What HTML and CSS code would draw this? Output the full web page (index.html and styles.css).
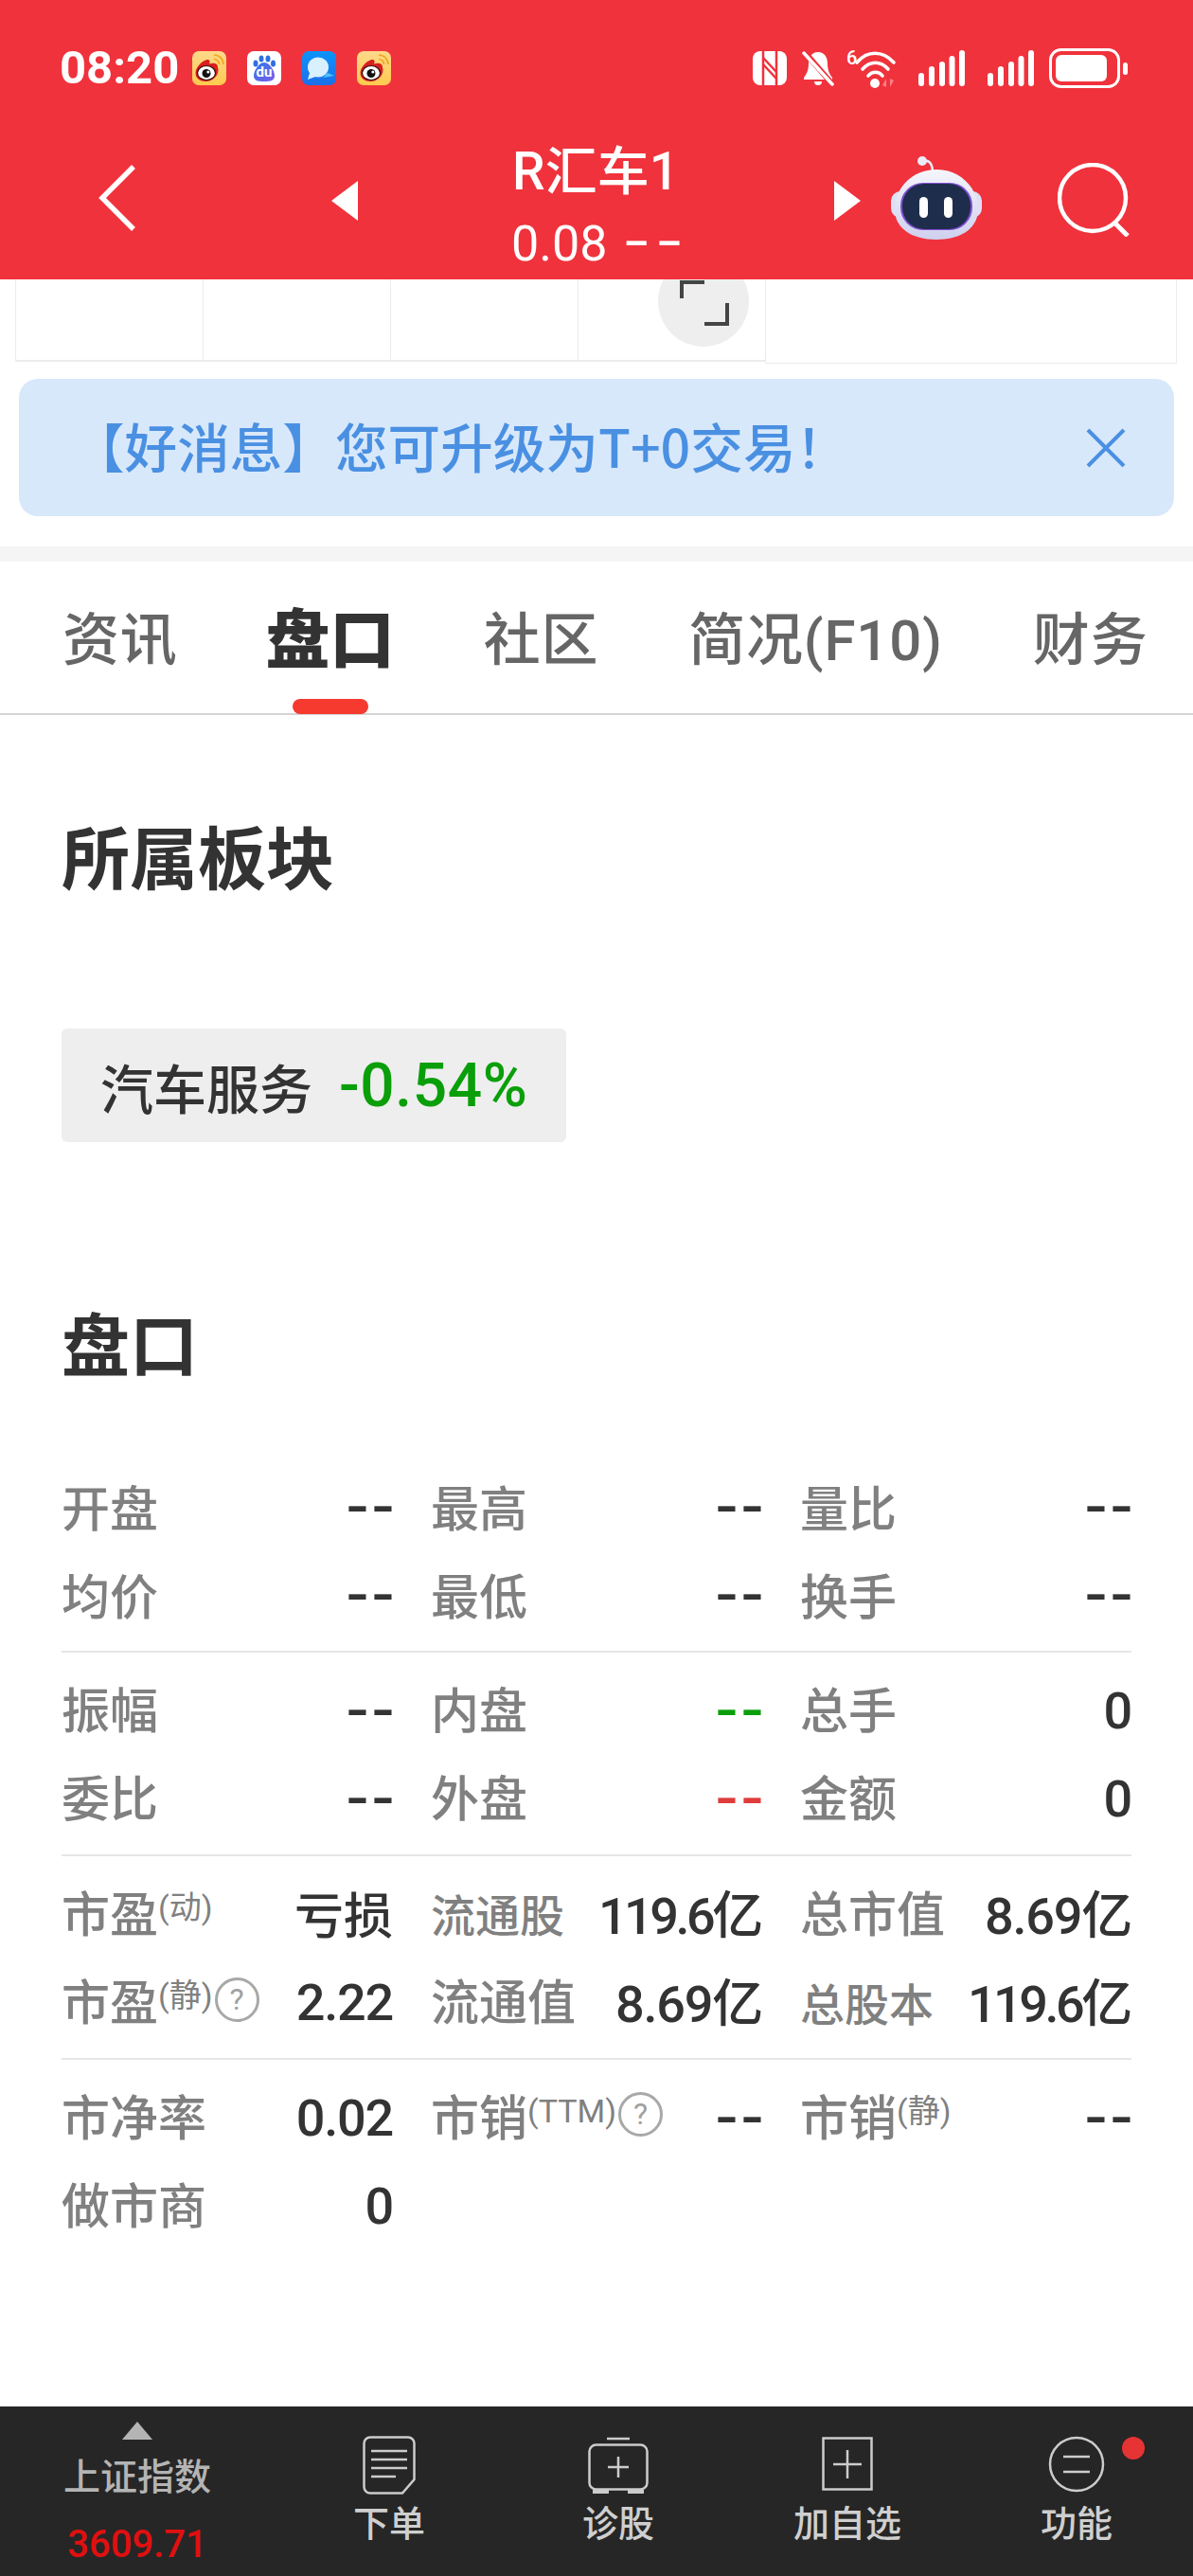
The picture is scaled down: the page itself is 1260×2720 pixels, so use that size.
FILE: index.html
```html
<!DOCTYPE html>
<html lang="zh-CN">
<head>
<meta charset="utf-8">
<title>R汇车1</title>
<link rel="stylesheet" href="styles.css">
</head>
<body>
<svg class="defs" width="0" height="0" aria-hidden="true">
  <defs>
    <linearGradient id="wbg" x1="0" y1="0" x2="0" y2="1"><stop offset="0" stop-color="#fdd98a"/><stop offset="1" stop-color="#fdc94f"/></linearGradient>
    <linearGradient id="msgbg" x1="0" y1="0" x2="0" y2="1"><stop offset="0" stop-color="#0d94fb"/><stop offset="1" stop-color="#1a6fe8"/></linearGradient>
    <linearGradient id="dugrad" x1="0" y1="0" x2="1" y2="1"><stop offset="0" stop-color="#2f7ae8"/><stop offset="1" stop-color="#7a5be8"/></linearGradient>
    <linearGradient id="shell" x1="0" y1="0" x2="0" y2="1"><stop offset="0" stop-color="#f4f5fb"/><stop offset="1" stop-color="#cfd0ee"/></linearGradient>
    <symbol id="weibo" viewBox="0 0 36 36">
      <rect width="36" height="36" rx="7" fill="url(#wbg)"/>
      <path d="M23 4a10 10 0 0 1 10 10M23 8.500a5.500 5.500 0 0 1 5.500 5.500" fill="none" stroke="#f2a51f" stroke-width="1.600"/>
      <path d="M3.500 23c0-6 7-13 12-14 3.500-.6 3.500 2.500 2.500 4.500 4.500-1.500 9-.5 9 3.500 0 1 .5 2 .5 3 0 6-6 12-13 12-6 0-11-3-11-9z" fill="#d81e1e"/>
      <ellipse cx="15" cy="23" rx="9.500" ry="7.500" fill="#fff" stroke="#3a0d0d" stroke-width="1.200"/>
      <circle cx="15" cy="23.500" r="4.500" fill="#111"/>
      <circle cx="16.800" cy="22" r="1.500" fill="#fff"/>
    </symbol>
  </defs>
</svg>

<header class="app-header">
  <div class="status-bar">
    <span class="clock">08:20</span>
    <div class="notif-icons">
      <svg class="app-icon" viewBox="0 0 36 36"><use href="#weibo"/></svg>
      <svg class="app-icon" viewBox="0 0 36 36">
        <rect width="36" height="36" rx="7" fill="#fff"/>
        <ellipse cx="9" cy="13" rx="2.500" ry="3.500" fill="#2f6fe0"/>
        <ellipse cx="15" cy="8" rx="2.500" ry="3.600" fill="#2f6fe0"/>
        <ellipse cx="22" cy="8" rx="2.500" ry="3.600" fill="#2f6fe0"/>
        <ellipse cx="27.500" cy="13" rx="2.500" ry="3.500" fill="#2f6fe0"/>
        <path d="M18 12c5 0 11 8 11 14 0 5-4 6-11 6s-11-1-11-6c0-6 6-14 11-14z" fill="url(#dugrad)"/>
        <text x="18" y="27" class="du-text">du</text>
      </svg>
      <svg class="app-icon" viewBox="0 0 36 36">
        <rect width="36" height="36" rx="7" fill="url(#msgbg)"/>
        <path d="M34 26l-7-3-5 5z" fill="#4cc0fb"/>
        <ellipse cx="17" cy="17" rx="11" ry="10.500" fill="#d9f0ff"/>
        <path d="M8 23l-2 7 8-3z" fill="#d9f0ff"/>
      </svg>
      <svg class="app-icon" viewBox="0 0 36 36"><use href="#weibo"/></svg>
    </div>
    <div class="sys-icons">
      <svg class="sys-nfc" viewBox="0 0 36 36">
        <rect width="36" height="36" rx="8" fill="#fff"/>
        <path d="M11 0v36M25 0v36" stroke="#f0323c" stroke-width="2.500"/>
        <path d="M11 7l14 15M11 14l14 15" stroke="#f0323c" stroke-width="2.500" fill="none"/>
      </svg>
      <svg class="sys-bell" viewBox="0 0 34 38">
        <path d="M17 2c-7 0-10 6-10 12 0 7-2 11-5 15v2h30v-2c-3-4-5-8-5-15 0-6-3-12-10-12z" fill="#fff"/>
        <path d="M13 33h8a4 4 0 0 1-8 0z" fill="#fff"/>
        <path d="M2 1l31 36" stroke="#f0323c" stroke-width="6"/>
        <path d="M2 3l30 33" stroke="#fff" stroke-width="3.500" stroke-linecap="round"/>
      </svg>
      <svg class="sys-wifi" viewBox="0 0 55 42">
        <text x="0" y="17" class="wifi-six">6</text>
        <path d="M11 15C22 2 38 2 50 15" fill="none" stroke="#fff" stroke-width="3.600" stroke-linecap="round"/>
        <path d="M17 22c8-9 19-9 27 0" fill="none" stroke="#fff" stroke-width="3.600" stroke-linecap="round"/>
        <path d="M23 29c4-5 11-5 15 0" fill="none" stroke="#fff" stroke-width="3.600" stroke-linecap="round"/>
        <circle cx="30" cy="37" r="5" fill="#fff"/>
        <path d="M42 41v-9l-4 7zM46 32v9l4-7z" fill="#f98088"/>
      </svg>
      <svg class="sys-signal" viewBox="0 0 49 38"><path d="M3 27v8M14 20v15M25 15v20M35.500 9v26M46 3v32" stroke="#fff" stroke-width="6" stroke-linecap="round"/></svg>
      <svg class="sys-signal" viewBox="0 0 49 38"><path d="M3 27v8M14 20v15M25 15v20M35.500 9v26M46 3v32" stroke="#fff" stroke-width="6" stroke-linecap="round"/></svg>
      <svg class="sys-batt" viewBox="0 0 84 42">
        <rect x="1.500" y="1.500" width="72" height="39" rx="11" fill="none" stroke="#fff" stroke-width="3"/>
        <rect x="7" y="7" width="54" height="28" rx="6" fill="#fff"/>
        <rect x="78" y="15" width="5" height="13" rx="2.500" fill="#fff"/>
      </svg>
    </div>
  </div>
  <nav class="nav-row">
    <svg class="nav-back" viewBox="0 0 44 74"><path d="M39 4L6 37l33 33" fill="none" stroke="#fff" stroke-width="5.500"/></svg>
    <svg class="nav-prev" viewBox="0 0 28 42"><path d="M28 0v42L0 21z" fill="#fff"/></svg>
    <div class="nav-title">
      <div class="stock-name">R汇车1</div>
      <div class="stock-price">0.08<span class="price-dash">--</span></div>
    </div>
    <svg class="nav-next" viewBox="0 0 28 42"><path d="M0 0v42l28-21z" fill="#fff"/></svg>
    <svg class="nav-robot" viewBox="0 0 96 90">
      <path d="M33 7c6-3 10 0 11 9" fill="none" stroke="#ecebf8" stroke-width="2.500"/>
      <circle cx="33" cy="6" r="5" fill="#ecebf8"/>
      <rect x="0" y="38" width="96" height="28" rx="10" fill="#dfe0f6"/>
      <path d="M48 15c26 0 44 20 44 42 0 20-18 32-44 32S4 77 4 57c0-22 18-42 44-42z" fill="url(#shell)"/>
      <rect x="10" y="29" width="76" height="50" rx="24" fill="#7f4fd0"/>
      <rect x="12" y="30" width="72" height="48" rx="23" fill="#1f2d4d"/>
      <rect x="30" y="44" width="9" height="22" rx="4.500" fill="#fff"/>
      <rect x="56" y="44" width="9" height="22" rx="4.500" fill="#fff"/>
    </svg>
    <svg class="nav-search" viewBox="0 0 78 78"><circle cx="37" cy="37" r="35" fill="none" stroke="#fff" stroke-width="4.500"/><path d="M60 63l14 14" stroke="#fff" stroke-width="5"/></svg>
  </nav>
</header>

<section class="chart-stub">
  <div class="stub-cell"></div>
  <div class="stub-cell"></div>
  <div class="stub-cell"></div>
  <div class="stub-cell"></div>
  <div class="stub-wide"></div>
  <div class="zoom-btn">
    <svg viewBox="0 0 96 96" class="zoom-glyph"><path d="M25 45V28h24M73 50v22H49" fill="none" stroke="#444" stroke-width="4"/></svg>
  </div>
</section>

<div class="notice">
  <span class="notice-text">【好消息】您可升级为T+0交易！</span>
  <svg class="notice-close" viewBox="0 0 44 44"><path d="M3 3l38 38M41 3L3 41" stroke="#4a90e2" stroke-width="4"/></svg>
</div>
<div class="divider-band"></div>

<div class="tabs">
  <span class="tab">资讯</span>
  <span class="tab tab-active">盘口</span>
  <span class="tab">社区</span>
  <span class="tab">简况(F10)</span>
  <span class="tab">财务</span>
</div>

<main class="content">
  <h2 class="section-title first-title">所属板块</h2>
  <div class="sector-tag"><span class="sector-name">汽车服务</span><span class="sector-change">-0.54%</span></div>
  <h2 class="section-title quote-title">盘口</h2>

  <div class="quote-group">
    <div class="cell"><span class="lbl">开盘</span><span class="val dash">--</span></div>
    <div class="cell"><span class="lbl">最高</span><span class="val dash">--</span></div>
    <div class="cell"><span class="lbl">量比</span><span class="val dash">--</span></div>
    <div class="cell"><span class="lbl">均价</span><span class="val dash">--</span></div>
    <div class="cell"><span class="lbl">最低</span><span class="val dash">--</span></div>
    <div class="cell"><span class="lbl">换手</span><span class="val dash">--</span></div>
  </div>
  <div class="quote-group">
    <div class="cell"><span class="lbl">振幅</span><span class="val dash">--</span></div>
    <div class="cell"><span class="lbl">内盘</span><span class="val dash green">--</span></div>
    <div class="cell"><span class="lbl">总手</span><span class="val">0</span></div>
    <div class="cell"><span class="lbl">委比</span><span class="val dash">--</span></div>
    <div class="cell"><span class="lbl">外盘</span><span class="val dash red">--</span></div>
    <div class="cell"><span class="lbl">金额</span><span class="val">0</span></div>
  </div>
  <div class="quote-group">
    <div class="cell"><span class="lbl">市盈<span class="sup">(动)</span></span><span class="val strong">亏损</span></div>
    <div class="cell"><span class="lbl small">流通股</span><span class="val yi"><span class="tight">119.6</span>亿</span></div>
    <div class="cell"><span class="lbl">总市值</span><span class="val yi">8.69亿</span></div>
    <div class="cell"><span class="lbl">市盈<span class="sup">(静)</span><span class="help">?</span></span><span class="val">2.22</span></div>
    <div class="cell"><span class="lbl">流通值</span><span class="val yi">8.69亿</span></div>
    <div class="cell"><span class="lbl small">总股本</span><span class="val yi"><span class="tight">119.6</span>亿</span></div>
  </div>
  <div class="quote-group last-group">
    <div class="cell"><span class="lbl">市净率</span><span class="val">0.02</span></div>
    <div class="cell"><span class="lbl">市销<span class="sup">(TTM)</span><span class="help">?</span></span><span class="val dash">--</span></div>
    <div class="cell"><span class="lbl">市销<span class="sup">(静)</span></span><span class="val dash">--</span></div>
    <div class="cell"><span class="lbl">做市商</span><span class="val">0</span></div>
  </div>
</main>

<footer class="bottom-bar">
  <div class="index-item">
    <span class="index-arrow"></span>
    <span class="index-name">上证指数</span>
    <span class="index-value">3609.71</span>
  </div>
  <div class="bar-item">
    <svg class="bar-icon" viewBox="0 0 56 62"><path d="M8 1.500h40a6.500 6.500 0 0 1 6.500 6.500v38L42 60.500H8A6.500 6.500 0 0 1 1.500 54V8A6.500 6.500 0 0 1 8 1.500z" fill="none" stroke="#ccc" stroke-width="2.500"/><path d="M9 16h38M9 25h38M9 34h38M9 43h26" stroke="#ccc" stroke-width="2.500"/></svg>
    <span class="bar-label">下单</span>
  </div>
  <div class="bar-item">
    <svg class="bar-icon" viewBox="0 0 64 62"><path d="M20 3h24" stroke="#ccc" stroke-width="2.500"/><rect x="1.500" y="9.500" width="61" height="47" rx="7" fill="none" stroke="#ccc" stroke-width="2.500"/><path d="M5 59h17M42 59h17" stroke="#ccc" stroke-width="4"/><path d="M32 22v22M21 33h22" stroke="#ccc" stroke-width="2.500"/></svg>
    <span class="bar-label">诊股</span>
  </div>
  <div class="bar-item">
    <svg class="bar-icon" viewBox="0 0 54 62"><rect x="1.500" y="2.500" width="51" height="54" fill="none" stroke="#ccc" stroke-width="2.500"/><path d="M27 15v30M12 30h30" stroke="#ccc" stroke-width="2.500"/></svg>
    <span class="bar-label">加自选</span>
  </div>
  <div class="bar-item">
    <svg class="bar-icon" viewBox="0 0 60 62"><ellipse cx="30" cy="30" rx="28" ry="28" fill="none" stroke="#ccc" stroke-width="2.500"/><path d="M16 22h28M16 38h28" stroke="#ccc" stroke-width="2.500"/></svg>
    <span class="bar-label">功能</span>
    <span class="red-dot"></span>
  </div>
</footer>
</body>
</html>
```
FILE: styles.css
```css
* { box-sizing: border-box; }
html, body { margin: 0; padding: 0; }
body {
  width: 1260px;
  height: 2720px;
  display: flex;
  flex-direction: column;
  background: #fff;
  font-family: Roboto, "Noto Sans CJK SC", sans-serif;
  color: #333;
  overflow: hidden;
}
.defs { position: absolute; }

/* Header */
.app-header {
  height: 295px;
  flex: none;
  background: #f0323c;
  color: #fff;
  position: relative;
  z-index: 2;
}
.status-bar {
  height: 139px;
  padding: 54px 68px 0 63px;
  display: flex;
  align-items: flex-start;
}
.clock { font-size: 49px; font-weight: 700; line-height: 36px; width: 140px; }
.notif-icons { display: flex; gap: 22px; }
.app-icon { width: 36px; height: 36px; display: block; }
.du-text { font: 700 15px Roboto, sans-serif; fill: #fff; text-anchor: middle; }
.sys-icons { margin-left: auto; display: flex; align-items: center; height: 36px; }
.sys-nfc { width: 36px; height: 36px; }
.sys-bell { width: 34px; height: 38px; margin-left: 16px; }
.sys-wifi { width: 55px; height: 42px; margin-left: 13px; }
.wifi-six { font: 500 20px Roboto, sans-serif; fill: #fff; }
.sys-signal { width: 49px; height: 38px; margin-left: 21px; }
.sys-signal + .sys-signal { margin-left: 24px; }
.sys-batt { width: 84px; height: 42px; margin-left: 16px; }

.nav-row { display: flex; align-items: flex-start; height: 156px; padding-left: 102px; }
.nav-back { width: 44px; height: 74px; margin-top: 33px; }
.nav-prev { width: 28px; height: 42px; margin-top: 52px; margin-left: 204px; }
.nav-title { width: 180px; margin-left: 160px; text-align: center; }
.stock-name { font-size: 55px; font-weight: 500; line-height: 78px; white-space: nowrap; padding: 3px 0 0 2px; }
.stock-price { font-size: 52px; line-height: 75px; white-space: nowrap; padding-left: 2px; }
.price-dash { letter-spacing: 9px; font-size: 90px; font-weight: 300; line-height: 0; margin-left: 18px; margin-right: -9px; vertical-align: -10px; }
.nav-next { width: 28px; height: 42px; margin-top: 52px; margin-left: 163px; }
.nav-robot { width: 96px; height: 90px; margin-top: 25px; margin-left: 32px; }
.nav-search { width: 78px; height: 78px; margin-top: 33px; margin-left: 80px; }

/* Chart remnant */
.chart-stub {
  height: 89px;
  flex: none;
  display: flex;
  padding: 0 17px 0 16px;
  position: relative;
  overflow: hidden;
}
.stub-cell {
  width: 198px;
  height: 87px;
  border: 1px solid #ececec;
  border-top: 0;
  border-right: 0;
  border-bottom-width: 2px;
}
.stub-wide { flex: 1; border: 1px solid #ececec; border-top: 0; }
.zoom-btn {
  position: absolute;
  left: 695px;
  top: -25px;
  width: 96px;
  height: 96px;
  border-radius: 50%;
  background: #eee;
}
.zoom-glyph { width: 96px; height: 96px; display: block; }

/* Notice */
.notice {
  flex: none;
  margin: 16px 20px 0;
  height: 145px;
  border-radius: 20px;
  background: #d8e8fb;
  display: flex;
  align-items: center;
  padding: 0 50px 0 56px;
}
.notice-text { font-size: 55.6px; font-weight: 500; color: #4a90e2; font-family: "Noto Sans CJK SC", sans-serif; white-space: nowrap; margin-top: -5px; }
.notice-close { width: 44px; height: 44px; margin-left: auto; }
.divider-band { flex: none; height: 16px; margin-top: 32px; background: #f5f5f5; }

/* Tabs */
.tabs {
  flex: none;
  height: 162px;
  display: flex;
  align-items: center;
  gap: 95px;
  padding: 8px 0 0 66px;
  border-bottom: 2px solid #d4d4d4;
}
.tab { font-size: 60px; font-weight: 500; line-height: 80px; letter-spacing: .8px; color: #666; white-space: nowrap; position: relative; }
.tab-active { font-size: 68px; font-weight: 900; letter-spacing: 0; color: #333; margin-left: -2px; margin-right: -1px; }
.tab-active::after {
  content: "";
  position: absolute;
  left: 28px;
  top: 101px;
  width: 80px;
  height: 16px;
  border-radius: 8px;
  background: #f63a30;
}

/* Content */
.content { flex: 1; padding: 0 65px; }
.section-title { margin: 0; font-size: 72px; font-weight: 700; line-height: 100px; color: #333; }
.first-title { margin-top: 104px; }
.sector-tag {
  margin-top: 127px;
  width: 533px;
  height: 120px;
  border-radius: 6px;
  background: #eeeeee;
  display: flex;
  align-items: center;
  padding-left: 41px;
  gap: 28px;
}
.sector-name { font-size: 56px; color: #333; font-weight: 500; }
.sector-change { font-size: 64px; color: #0a9f0a; font-weight: 500; letter-spacing: .6px; }
.quote-title { margin-top: 167px; margin-bottom: 57px; }

.quote-group {
  display: grid;
  grid-template-columns: repeat(3, 350px);
  column-gap: 40px;
  padding: 16px 0 10px;
  border-bottom: 2px solid #e6e6e6;
}
.last-group { border-bottom: 0; }
.cell { height: 93.5px; display: flex; align-items: center; justify-content: space-between; white-space: nowrap; }
.lbl { font-size: 51px; font-weight: 500; color: #808080; display: flex; align-items: center; margin-top: -6px; }
.lbl.small { font-size: 47px; margin-top: -2px; }
.quote-group + .quote-group .lbl { margin-top: -10px; }
.quote-group + .quote-group .lbl.small { margin-top: -6px; }
.sup { font-size: 34px; font-weight: 400; line-height: 1; margin-top: -8px; color: #808080; }
.help {
  width: 47px;
  height: 47px;
  border: 3px solid #a8a8a8;
  border-radius: 50%;
  color: #a0a0a0;
  font-size: 32px;
  font-weight: 400;
  line-height: 41px;
  text-align: center;
  margin-left: 2px;
}
.val { font-size: 54px; font-weight: 500; letter-spacing: -1.2px; color: #333; margin-top: -3px; }
.val.strong { font-size: 52px; letter-spacing: 0; margin-top: -6px; }
.val.yi { margin-top: -9px; }
.tight { letter-spacing: -3.5px; }
.dash { font-size: 76px; font-weight: 400; line-height: 1; letter-spacing: 6px; margin-right: -6px; margin-top: -6px; }
.green { color: #0a9f0a; }
.red { color: #e03c3c; }

/* Bottom bar */
.bottom-bar {
  flex: none;
  height: 179px;
  background: #262626;
  display: grid;
  grid-template-columns: 290px repeat(4, 242px);
}
.index-item { display: flex; flex-direction: column; align-items: center; padding-top: 16px; }
.index-arrow {
  width: 0;
  height: 0;
  border-left: 16px solid transparent;
  border-right: 16px solid transparent;
  border-bottom: 19px solid #b4b4b4;
}
.index-name { font-size: 39px; font-weight: 500; line-height: 50px; margin-top: 15px; color: #b4b4b4; }
.index-value { font-size: 40px; font-weight: 500; line-height: 50px; margin-top: 21px; color: #e01010; }
.bar-item { display: flex; flex-direction: column; align-items: center; padding-top: 31px; position: relative; }
.bar-icon { height: 62px; display: block; }
.bar-label { font-size: 38px; font-weight: 500; line-height: 62px; color: #cfcfcf; }
.red-dot {
  position: absolute;
  left: 169px;
  top: 32px;
  width: 24px;
  height: 24px;
  border-radius: 50%;
  background: #e63333;
}
```
